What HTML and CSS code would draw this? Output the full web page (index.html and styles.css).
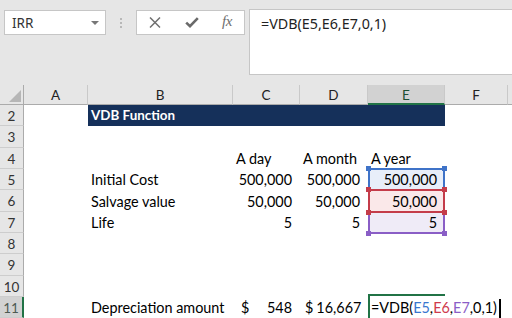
FILE: index.html
```html
<!DOCTYPE html>
<html>
<head>
<meta charset="utf-8">
<link rel="stylesheet" href="styles.css">
</head>
<body>
<div class="app">
  <div class="toolbar">
    <div class="namebox"><span class="name">IRR</span><span class="dd"></span></div>
    <div class="grip"><i></i><i></i><i></i></div>
    <div class="fbuttons">
      <svg class="i-x" width="12" height="11" viewBox="0 0 12 11"><path d="M1 0.5L11 10.5M11 0.5L1 10.5" stroke="#707070" stroke-width="1.5" fill="none"/></svg>
      <svg class="i-ok" width="14" height="11" viewBox="0 0 14 11"><path d="M1.2 5.6L5 9.2L12.8 1.2" stroke="#6a6a6a" stroke-width="2.6" fill="none"/></svg>
      <span class="fx">fx</span>
    </div>
    <div class="formula">=VDB(E5,E6,E7,0,1)</div>
  </div>

  <div class="sheet">
    <div class="corner"><svg width="12" height="12" viewBox="0 0 12 12"><path d="M12 0V12H0Z" fill="#b6b6b6"/></svg></div>
    <div class="ch">A</div>
    <div class="ch">B</div>
    <div class="ch">C</div>
    <div class="ch">D</div>
    <div class="ch sel">E</div>
    <div class="ch">F</div>
    <div class="ch last"></div>

    <div class="rh">2</div>
    <div class="c"></div>
    <div class="c title">VDB Function</div>
    <div class="c"></div>
    <div class="c"></div>

    <div class="rh">3</div>
    <div class="c"></div><div class="c"></div><div class="c"></div><div class="c"></div><div class="c"></div><div class="c"></div><div class="c"></div>

    <div class="rh">4</div>
    <div class="c"></div><div class="c"></div>
    <div class="c">A day</div>
    <div class="c">A month</div>
    <div class="c">A year</div>
    <div class="c"></div><div class="c"></div>

    <div class="rh">5</div>
    <div class="c"></div>
    <div class="c">Initial Cost</div>
    <div class="c r">500,000</div>
    <div class="c r">500,000</div>
    <div class="c r hl blue"><span class="box"><i class="tl"></i><i class="tr"></i></span><span class="v">500,000</span></div>
    <div class="c"></div><div class="c"></div>

    <div class="rh">6</div>
    <div class="c"></div>
    <div class="c">Salvage value</div>
    <div class="c r">50,000</div>
    <div class="c r">50,000</div>
    <div class="c r hl red"><span class="box"><i class="tl"></i><i class="tr"></i><i class="bl"></i><i class="br"></i></span><span class="v">50,000</span></div>
    <div class="c"></div><div class="c"></div>

    <div class="rh">7</div>
    <div class="c"></div>
    <div class="c">Life</div>
    <div class="c r">5</div>
    <div class="c r">5</div>
    <div class="c r hl purple"><span class="box"><i class="bl"></i><i class="br"></i></span><span class="v">5</span></div>
    <div class="c"></div><div class="c"></div>

    <div class="rh">8</div>
    <div class="c"></div><div class="c"></div><div class="c"></div><div class="c"></div><div class="c"></div><div class="c"></div><div class="c"></div>

    <div class="rh">9</div>
    <div class="c"></div><div class="c"></div><div class="c"></div><div class="c"></div><div class="c"></div><div class="c"></div><div class="c"></div>

    <div class="rh">10</div>
    <div class="c"></div><div class="c"></div><div class="c"></div><div class="c"></div><div class="c"></div><div class="c"></div><div class="c"></div>

    <div class="rh sel">11</div>
    <div class="c"></div>
    <div class="c">Depreciation amount</div>
    <div class="c acc"><span>$</span><span>548</span></div>
    <div class="c acc d"><span>$</span><span>16,667</span></div>
    <div class="c edit"><span class="ebox"></span><span class="etext">=VDB(<b class="cb">E5</b>,<b class="cr">E6</b>,<b class="cp">E7</b>,0,1)<span class="cursor"></span></span></div>
    <div class="c"></div><div class="c"></div>
  </div>
</div>
</body>
</html>
```

FILE: styles.css
```css
html, body {
  margin: 0;
  padding: 0;
  background: #ffffff;
}
body {
  width: 512px;
  height: 318px;
  overflow: hidden;
  font-family: Lato, "Liberation Sans", sans-serif;
  color: #000;
}

/* ---------- formula toolbar ---------- */
.toolbar {
  height: 85px;
  box-sizing: border-box;
  background: #e6e6e6;
  display: flex;
  align-items: flex-start;
  padding-top: 10px;
}
.namebox {
  margin-left: 4px;
  width: 102px;
  height: 25px;
  box-sizing: border-box;
  border: 1px solid #c6c6c6;
  background: #fff;
  display: flex;
  align-items: center;
  justify-content: space-between;
  padding: 0 6px 0 7px;
  font-family: "Noto Sans", "Open Sans", sans-serif;
  font-size: 13.5px;
  color: #333;
}
.dd {
  width: 0;
  height: 0;
  border-left: 4px solid transparent;
  border-right: 4px solid transparent;
  border-top: 4px solid #777;
  margin-top: 1px;
}
.grip {
  width: 2px;
  margin: 8px 14px 0 14px;
  display: flex;
  flex-direction: column;
  gap: 2px;
}
.grip i {
  display: block;
  width: 2px;
  height: 2px;
  background: #b8b8b8;
}
.fbuttons {
  width: 109px;
  height: 25px;
  box-sizing: border-box;
  border: 1px solid #c6c6c6;
  background: #fff;
  display: flex;
  align-items: center;
}
.i-x { margin-left: 12px; }
.i-ok { margin-left: 24px; }
.fx {
  margin-left: 23px;
  font-family: "Liberation Serif", serif;
  font-style: italic;
  font-size: 15px;
  color: #6e6e6e;
  letter-spacing: -0.5px;
  margin-top: -2px;
}
.formula {
  margin-left: 4px;
  margin-top: -1px;
  flex: 1;
  height: 66px;
  box-sizing: border-box;
  border: 1px solid #c6c6c6;
  border-right: none;
  background: #fff;
  padding: 5px 0 0 11px;
  font-family: "Noto Sans", "Open Sans", sans-serif;
  font-size: 14.3px;
  line-height: 18px;
  color: #222;
}

/* ---------- sheet grid ---------- */
.sheet {
  display: grid;
  grid-template-columns: 24px 64px 145px 67px 68px 77px 63px 1fr;
  grid-template-rows: 20px repeat(10, 21.33px);
  font-size: 14.4px;
}
.corner {
  background: #e6e6e6;
  border-right: 1px solid #ababab;
  border-bottom: 1px solid #ababab;
  box-sizing: border-box;
  display: flex;
  align-items: flex-end;
  justify-content: flex-end;
  padding: 0 2px 2px 0;
}
.ch {
  background: #e6e6e6;
  box-sizing: border-box;
  border-right: 1px solid #c9c9c9;
  border-bottom: 1px solid #ababab;
  display: flex;
  align-items: center;
  justify-content: center;
  font-size: 13.5px;
  color: #222;
  padding-top: 1px;
}
.ch.last { border-right: none; }
.ch.sel {
  background: #d2d2d2;
  border-bottom: 2px solid #217346;
  color: #1d4f33;
}
.rh {
  background: #e6e6e6;
  box-sizing: border-box;
  border-right: 1px solid #ababab;
  border-bottom: 1px solid #cdcdcd;
  display: flex;
  align-items: center;
  justify-content: center;
  font-size: 13.5px;
  color: #333;
  padding-top: 2px;
}
.rh.sel {
  background: #d2d2d2;
  border-right: 2px solid #217346;
  color: #4d5a52;
}
.c {
  position: relative;
  display: flex;
  align-items: flex-end;
  padding: 0 3px 2px 3px;
  line-height: 17px;
  white-space: nowrap;
  box-sizing: border-box;
}
.c.r {
  justify-content: flex-end;
  padding-right: 8px;
}
.c.title {
  grid-column: span 4;
  background: #15305a;
  color: #fff;
  font-weight: bold;
  font-size: 13.4px;
  padding-left: 3px;
}
.c.acc {
  justify-content: space-between;
  padding-left: 8px;
  padding-right: 8px;
}
.c.acc.d {
  padding-left: 5px;
  gap: 3px;
}

/* referenced range highlights */
.hl .box {
  position: absolute;
  top: -1px;
  left: 0;
  right: 0;
  bottom: -1px;
  border: 2px solid;
}
.hl .v { position: relative; }
.hl i {
  position: absolute;
  width: 5px;
  height: 5px;
}
.hl .tl { top: -4px; left: -4px; }
.hl .tr { top: -4px; right: -4px; }
.hl .bl { bottom: -4px; left: -4px; }
.hl .br { bottom: -4px; right: -4px; }
.blue .box { border-color: #3f73c8; background: #e8eef9; }
.blue i { background: #3f73c8; }
.red { z-index: 2; }
.red .box { border-color: #c43c4a; background: #fae8e9; }
.red i { background: #c43c4a; }
.purple .box { border-color: #8a5ec6; background: #efebf7; }
.purple i { background: #8a5ec6; }

/* cell in edit mode */
.edit { z-index: 3; overflow: visible; }
.ebox {
  position: absolute;
  top: -3px;
  left: 0;
  width: 77px;
  bottom: -3px;
  border-top: 2px solid #217346;
  border-left: 2px solid #217346;
  box-sizing: border-box;
}
.etext {
  position: relative;
  background: #fff;
  display: flex;
  align-items: flex-end;
}
.etext b { font-weight: normal; }
.cb { color: #3a76cf; }
.cr { color: #cf3a4d; }
.cp { color: #8a5ec6; }
.cursor {
  display: inline-block;
  width: 2px;
  height: 19px;
  background: #000;
  margin-left: 2px;
  margin-bottom: -2px;
}
```
